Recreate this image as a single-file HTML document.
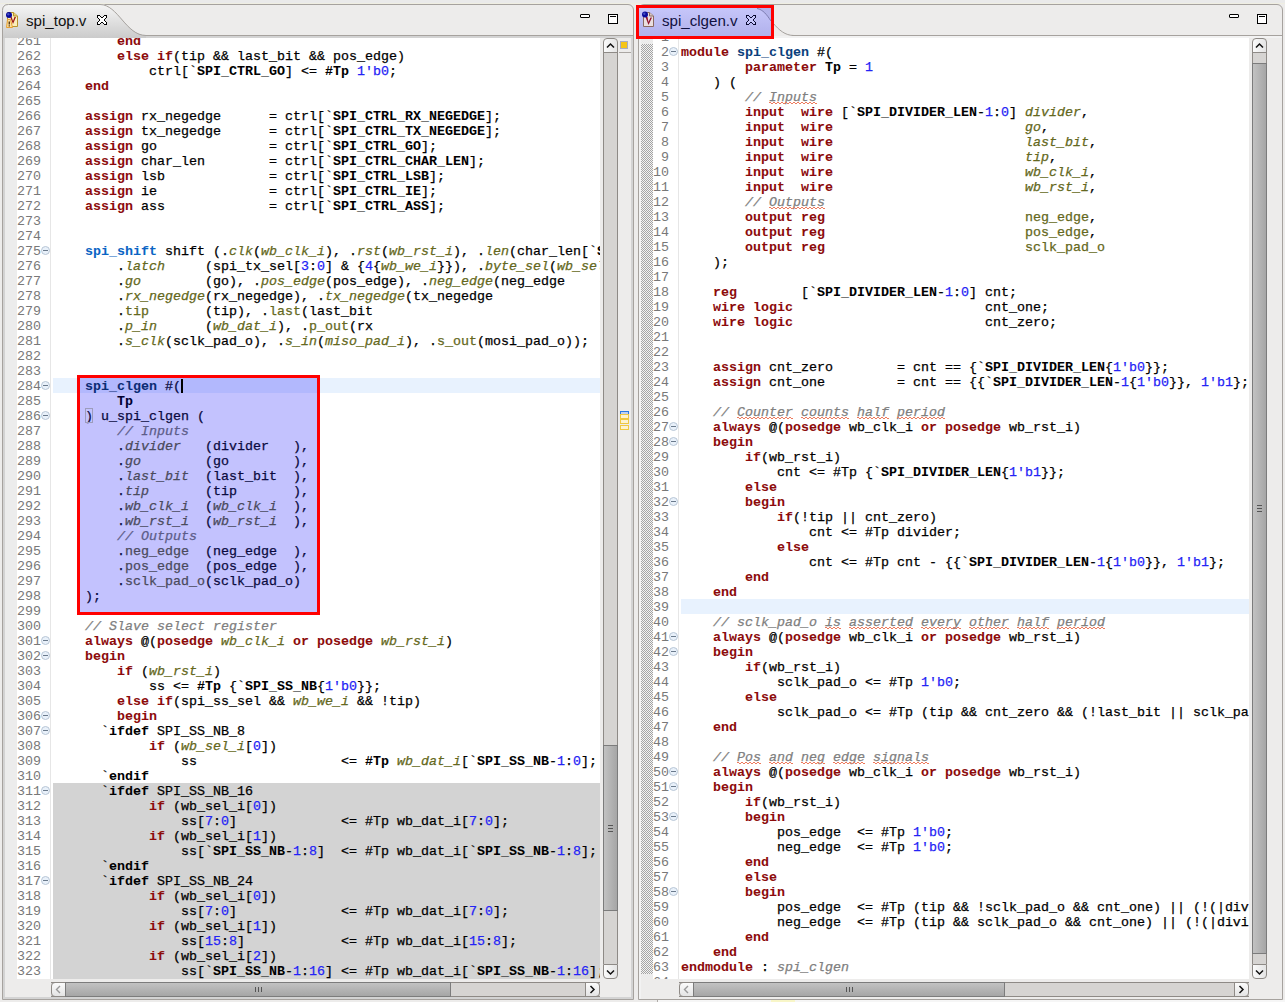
<!DOCTYPE html>
<html><head><meta charset="utf-8"><style>
*{margin:0;padding:0;box-sizing:border-box}
html,body{width:1285px;height:1002px;overflow:hidden;background:#edeceb;position:relative;font-family:"Liberation Sans",sans-serif}
.a{position:absolute}
.code{position:absolute;font-family:"Liberation Mono",monospace;font-size:13.333px;-webkit-text-stroke:0.25px currentColor;line-height:15px;white-space:pre;color:#000}
.ln{position:absolute;font-family:"Liberation Mono",monospace;font-size:13.333px;line-height:15px;white-space:pre;color:#787878;text-align:right}
i{font-style:normal}
i.k{font-weight:bold;color:#8c0b0b;-webkit-text-stroke:0.05px currentColor}
i.b{font-weight:bold;-webkit-text-stroke:0.05px currentColor}
i.n{color:#2323f5}
i.c{font-style:italic;color:#808080}
i.cs{font-style:italic;color:#808080}
.sq{position:absolute;height:2px;background:repeating-linear-gradient(90deg,#ee7a5c 0 2px,transparent 2px 4px) 0 0/100% 1px no-repeat,repeating-linear-gradient(90deg,transparent 0 2px,#ee7a5c 2px 4px) 0 1px/100% 1px no-repeat}
i.pi{font-style:italic;color:#646820}
i.po{color:#646820}
i.mi{font-weight:bold;color:#0a64c4;-webkit-text-stroke:0.05px currentColor}
i.md{font-weight:bold;color:#0b3f7c;-webkit-text-stroke:0.05px currentColor}

.sel{color:#0a0a40}
.sel i.pi,.sel i.po{color:#4a4a5c}
.sel i.c{color:#5c5c88}
.sel i.md{color:#0c2c74}
.sel i.b{color:#000030}
.fold{position:absolute;width:9px;height:9px;border-radius:50%;background:#e9f1fa;border:1px solid #b8c6d6}
.fold:after{content:"";position:absolute;left:1px;top:3px;width:5px;height:1px;background:#6a7a8c}
</style></head>
<body>
<div class="a" style="left:0;top:0;width:1285px;height:3px;background:#eaeaea"></div>
<div class="a" style="left:0;top:3px;width:1285px;height:1px;background:#efeee2"></div>
<div class="a" style="left:657px;top:1000px;width:628px;height:2px;background:#f6f6f6;border-left:1px solid #b0aca8"></div>
<div class="a" style="left:771px;top:1000px;width:24px;height:2px;background:#f8f6c8"></div>
<div class="a" style="left:2px;top:4px;width:632px;height:996px;border:1px solid #a6a29e;border-radius:6px 6px 0 0;background:#edeceb"></div>
<div class="a" style="left:143px;top:35px;width:490px;height:1px;background:#a6a29e"></div>
<div class="a" style="left:3px;top:36px;width:630px;height:2px;background:#d3d3d3"></div>
<div class="a" style="left:3px;top:36px;width:2px;height:963px;background:#d3d3d3"></div>
<div class="a" style="left:631px;top:36px;width:2px;height:963px;background:#d3d3d3"></div>
<div class="a" style="left:3px;top:997px;width:630px;height:2px;background:#d3d3d3"></div>
<div class="a" style="left:5px;top:38px;width:12px;height:941px;background:#ececec"></div>
<div class="a" style="left:17px;top:38px;width:33px;height:941px;background:#fff"></div>
<div class="a" style="left:50px;top:38px;width:1px;height:941px;background:#e6e6e6"></div>
<div class="a" style="left:51px;top:38px;width:549px;height:941px;background:#fff"></div>
<div class="a" style="left:53px;top:378px;width:547px;height:15px;background:#e8f2fe"></div>
<div class="a" style="left:53px;top:783px;width:547px;height:196px;background:#d3d3d3"></div>
<div class="a" style="left:77px;top:378px;width:240px;height:234px;background:#c3c2fe"></div>
<div class="a" style="left:77px;top:378px;width:240px;height:15px;background:#b2b8fd"></div>
<div class="a" style="left:53px;top:38px;width:547px;height:941px;overflow:hidden"><div class="code" style="left:0;top:-4px">        <i class="k">end</i></div><div class="code" style="left:0;top:11px">        <i class="k">else</i> <i class="k">if</i>(tip &amp;&amp; last_bit &amp;&amp; pos_edge)</div><div class="code" style="left:0;top:26px">            ctrl[`<i class="b">SPI_CTRL_GO</i>] &lt;= <i class="b">#Tp</i> <i class="n">1'b0</i>;</div><div class="code" style="left:0;top:41px">    <i class="k">end</i></div><div class="code" style="left:0;top:56px"></div><div class="code" style="left:0;top:71px">    <i class="k">assign</i> rx_negedge      = ctrl[`<i class="b">SPI_CTRL_RX_NEGEDGE</i>];</div><div class="code" style="left:0;top:86px">    <i class="k">assign</i> tx_negedge      = ctrl[`<i class="b">SPI_CTRL_TX_NEGEDGE</i>];</div><div class="code" style="left:0;top:101px">    <i class="k">assign</i> go              = ctrl[`<i class="b">SPI_CTRL_GO</i>];</div><div class="code" style="left:0;top:116px">    <i class="k">assign</i> char_len        = ctrl[`<i class="b">SPI_CTRL_CHAR_LEN</i>];</div><div class="code" style="left:0;top:131px">    <i class="k">assign</i> lsb             = ctrl[`<i class="b">SPI_CTRL_LSB</i>];</div><div class="code" style="left:0;top:146px">    <i class="k">assign</i> ie              = ctrl[`<i class="b">SPI_CTRL_IE</i>];</div><div class="code" style="left:0;top:161px">    <i class="k">assign</i> ass             = ctrl[`<i class="b">SPI_CTRL_ASS</i>];</div><div class="code" style="left:0;top:176px"></div><div class="code" style="left:0;top:191px"></div><div class="code" style="left:0;top:206px">    <i class="mi">spi_shift</i> shift (.<i class="pi">clk</i>(<i class="pi">wb_clk_i</i>), .<i class="pi">rst</i>(<i class="pi">wb_rst_i</i>), .<i class="pi">len</i>(char_len[`<i class="b">SPI_CTRL_LEN</i>]),</div><div class="code" style="left:0;top:221px">        .<i class="pi">latch</i>     (spi_tx_sel[<i class="n">3</i>:<i class="n">0</i>] &amp; {<i class="n">4</i>{<i class="pi">wb_we_i</i>}}), .<i class="pi">byte_sel</i>(<i class="pi">wb_sel_i</i>),</div><div class="code" style="left:0;top:236px">        .<i class="pi">go</i>        (go), .<i class="pi">pos_edge</i>(pos_edge), .<i class="pi">neg_edge</i>(neg_edge</div><div class="code" style="left:0;top:251px">        .<i class="pi">rx_negedge</i>(rx_negedge), .<i class="pi">tx_negedge</i>(tx_negedge</div><div class="code" style="left:0;top:266px">        .<i class="po">tip</i>       (tip), .<i class="po">last</i>(last_bit</div><div class="code" style="left:0;top:281px">        .<i class="pi">p_in</i>      (<i class="pi">wb_dat_i</i>), .<i class="po">p_out</i>(rx</div><div class="code" style="left:0;top:296px">        .<i class="pi">s_clk</i>(sclk_pad_o), .<i class="pi">s_in</i>(<i class="pi">miso_pad_i</i>), .<i class="po">s_out</i>(mosi_pad_o));</div><div class="code" style="left:0;top:311px"></div><div class="code" style="left:0;top:326px"></div><div class="code sel" style="left:0;top:341px">    <i class="md">spi_clgen</i> #(</div><div class="code sel" style="left:0;top:356px">        <i class="b">Tp</i></div><div class="code sel" style="left:0;top:371px">    <i class="bm">)</i> u_spi_clgen (</div><div class="code sel" style="left:0;top:386px">        <i class="c">// Inputs</i></div><div class="code sel" style="left:0;top:401px">        .<i class="pi">divider</i>   (divider   ),</div><div class="code sel" style="left:0;top:416px">        .<i class="pi">go</i>        (go        ),</div><div class="code sel" style="left:0;top:431px">        .<i class="pi">last_bit</i>  (last_bit  ),</div><div class="code sel" style="left:0;top:446px">        .<i class="pi">tip</i>       (tip       ),</div><div class="code sel" style="left:0;top:461px">        .<i class="pi">wb_clk_i</i>  (<i class="pi">wb_clk_i</i>  ),</div><div class="code sel" style="left:0;top:476px">        .<i class="pi">wb_rst_i</i>  (<i class="pi">wb_rst_i</i>  ),</div><div class="code sel" style="left:0;top:491px">        <i class="c">// Outputs</i></div><div class="code sel" style="left:0;top:506px">        .<i class="po">neg_edge</i>  (neg_edge  ),</div><div class="code sel" style="left:0;top:521px">        .<i class="po">pos_edge</i>  (pos_edge  ),</div><div class="code sel" style="left:0;top:536px">        .<i class="po">sclk_pad_o</i>(sclk_pad_o)</div><div class="code sel" style="left:0;top:551px">    );</div><div class="code" style="left:0;top:566px"></div><div class="code" style="left:0;top:581px">    <i class="c">// Slave select register</i></div><div class="code" style="left:0;top:596px">    <i class="k">always</i> @(<i class="k">posedge</i> <i class="pi">wb_clk_i</i> <i class="k">or</i> <i class="k">posedge</i> <i class="pi">wb_rst_i</i>)</div><div class="code" style="left:0;top:611px">    <i class="k">begin</i></div><div class="code" style="left:0;top:626px">        <i class="k">if</i> (<i class="pi">wb_rst_i</i>)</div><div class="code" style="left:0;top:641px">            ss &lt;= <i class="b">#Tp</i> {`<i class="b">SPI_SS_NB</i>{<i class="n">1'b0</i>}};</div><div class="code" style="left:0;top:656px">        <i class="k">else</i> <i class="k">if</i>(spi_ss_sel &amp;&amp; <i class="pi">wb_we_i</i> &amp;&amp; !tip)</div><div class="code" style="left:0;top:671px">        <i class="k">begin</i></div><div class="code" style="left:0;top:686px">      `<i class="b">ifdef</i> SPI_SS_NB_8</div><div class="code" style="left:0;top:701px">            <i class="k">if</i> (<i class="pi">wb_sel_i</i>[<i class="n">0</i>])</div><div class="code" style="left:0;top:716px">                ss                  &lt;= <i class="b">#Tp</i> <i class="pi">wb_dat_i</i>[`<i class="b">SPI_SS_NB</i>-<i class="n">1</i>:<i class="n">0</i>];</div><div class="code" style="left:0;top:731px">      `<i class="b">endif</i></div><div class="code gray" style="left:0;top:746px">      `<i class="b">ifdef</i> SPI_SS_NB_16</div><div class="code gray" style="left:0;top:761px">            <i class="k">if</i> (wb_sel_i[<i class="n">0</i>])</div><div class="code gray" style="left:0;top:776px">                ss[<i class="n">7</i>:<i class="n">0</i>]             &lt;= #Tp wb_dat_i[<i class="n">7</i>:<i class="n">0</i>];</div><div class="code gray" style="left:0;top:791px">            <i class="k">if</i> (wb_sel_i[<i class="n">1</i>])</div><div class="code gray" style="left:0;top:806px">                ss[`<i class="b">SPI_SS_NB</i>-<i class="n">1</i>:<i class="n">8</i>]  &lt;= #Tp wb_dat_i[`<i class="b">SPI_SS_NB</i>-<i class="n">1</i>:<i class="n">8</i>];</div><div class="code gray" style="left:0;top:821px">      `<i class="b">endif</i></div><div class="code gray" style="left:0;top:836px">      `<i class="b">ifdef</i> SPI_SS_NB_24</div><div class="code gray" style="left:0;top:851px">            <i class="k">if</i> (wb_sel_i[<i class="n">0</i>])</div><div class="code gray" style="left:0;top:866px">                ss[<i class="n">7</i>:<i class="n">0</i>]             &lt;= #Tp wb_dat_i[<i class="n">7</i>:<i class="n">0</i>];</div><div class="code gray" style="left:0;top:881px">            <i class="k">if</i> (wb_sel_i[<i class="n">1</i>])</div><div class="code gray" style="left:0;top:896px">                ss[<i class="n">15</i>:<i class="n">8</i>]            &lt;= #Tp wb_dat_i[<i class="n">15</i>:<i class="n">8</i>];</div><div class="code gray" style="left:0;top:911px">            <i class="k">if</i> (wb_sel_i[<i class="n">2</i>])</div><div class="code gray" style="left:0;top:926px">                ss[`<i class="b">SPI_SS_NB</i>-<i class="n">1</i>:<i class="n">16</i>] &lt;= #Tp wb_dat_i[`<i class="b">SPI_SS_NB</i>-<i class="n">1</i>:<i class="n">16</i>];</div></div>
<div class="a" style="left:85px;top:408px;width:8px;height:15px;border:1px solid #9c9cbc"></div>
<div class="a" style="left:181px;top:379px;width:2px;height:14px;background:#000"></div>
<div class="a" style="left:0;top:38px;width:41px;height:941px;overflow:hidden"><div class="ln" style="right:0;top:-4px">261</div><div class="ln" style="right:0;top:11px">262</div><div class="ln" style="right:0;top:26px">263</div><div class="ln" style="right:0;top:41px">264</div><div class="ln" style="right:0;top:56px">265</div><div class="ln" style="right:0;top:71px">266</div><div class="ln" style="right:0;top:86px">267</div><div class="ln" style="right:0;top:101px">268</div><div class="ln" style="right:0;top:116px">269</div><div class="ln" style="right:0;top:131px">270</div><div class="ln" style="right:0;top:146px">271</div><div class="ln" style="right:0;top:161px">272</div><div class="ln" style="right:0;top:176px">273</div><div class="ln" style="right:0;top:191px">274</div><div class="ln" style="right:0;top:206px">275</div><div class="ln" style="right:0;top:221px">276</div><div class="ln" style="right:0;top:236px">277</div><div class="ln" style="right:0;top:251px">278</div><div class="ln" style="right:0;top:266px">279</div><div class="ln" style="right:0;top:281px">280</div><div class="ln" style="right:0;top:296px">281</div><div class="ln" style="right:0;top:311px">282</div><div class="ln" style="right:0;top:326px">283</div><div class="ln" style="right:0;top:341px">284</div><div class="ln" style="right:0;top:356px">285</div><div class="ln" style="right:0;top:371px">286</div><div class="ln" style="right:0;top:386px">287</div><div class="ln" style="right:0;top:401px">288</div><div class="ln" style="right:0;top:416px">289</div><div class="ln" style="right:0;top:431px">290</div><div class="ln" style="right:0;top:446px">291</div><div class="ln" style="right:0;top:461px">292</div><div class="ln" style="right:0;top:476px">293</div><div class="ln" style="right:0;top:491px">294</div><div class="ln" style="right:0;top:506px">295</div><div class="ln" style="right:0;top:521px">296</div><div class="ln" style="right:0;top:536px">297</div><div class="ln" style="right:0;top:551px">298</div><div class="ln" style="right:0;top:566px">299</div><div class="ln" style="right:0;top:581px">300</div><div class="ln" style="right:0;top:596px">301</div><div class="ln" style="right:0;top:611px">302</div><div class="ln" style="right:0;top:626px">303</div><div class="ln" style="right:0;top:641px">304</div><div class="ln" style="right:0;top:656px">305</div><div class="ln" style="right:0;top:671px">306</div><div class="ln" style="right:0;top:686px">307</div><div class="ln" style="right:0;top:701px">308</div><div class="ln" style="right:0;top:716px">309</div><div class="ln" style="right:0;top:731px">310</div><div class="ln" style="right:0;top:746px">311</div><div class="ln" style="right:0;top:761px">312</div><div class="ln" style="right:0;top:776px">313</div><div class="ln" style="right:0;top:791px">314</div><div class="ln" style="right:0;top:806px">315</div><div class="ln" style="right:0;top:821px">316</div><div class="ln" style="right:0;top:836px">317</div><div class="ln" style="right:0;top:851px">318</div><div class="ln" style="right:0;top:866px">319</div><div class="ln" style="right:0;top:881px">320</div><div class="ln" style="right:0;top:896px">321</div><div class="ln" style="right:0;top:911px">322</div><div class="ln" style="right:0;top:926px">323</div></div>
<div class="fold" style="left:41px;top:246.0px"></div>
<div class="fold" style="left:41px;top:381.0px"></div>
<div class="fold" style="left:41px;top:411.0px"></div>
<div class="fold" style="left:41px;top:636.0px"></div>
<div class="fold" style="left:41px;top:651.0px"></div>
<div class="fold" style="left:41px;top:711.0px"></div>
<div class="fold" style="left:41px;top:726.0px"></div>
<div class="fold" style="left:41px;top:786.0px"></div>
<div class="fold" style="left:41px;top:876.0px"></div>
<div class="a" style="left:77px;top:375px;width:243px;height:240px;border:3px solid #ff0000"></div>
<div class="a" style="left:638px;top:4px;width:645px;height:996px;border:1px solid #a6a29e;border-radius:6px 6px 0 0;background:#edeceb"></div>
<div class="a" style="left:792px;top:35px;width:490px;height:1px;background:#a6a29e"></div>
<div class="a" style="left:639px;top:36px;width:643px;height:2px;background:#f2f2f2"></div>
<div class="a" style="left:639px;top:36px;width:2px;height:963px;background:#f2f2f2"></div>
<div class="a" style="left:641px;top:38px;width:12px;height:941px;background:#ececec"></div>
<div class="a" style="left:641px;top:44px;width:12px;height:930px;background:repeating-conic-gradient(#a4a4a4 0 25%,#f2f2f2 0 50%) 0 0/2px 2px"></div>
<div class="a" style="left:653px;top:38px;width:25px;height:941px;background:#fff"></div>
<div class="a" style="left:678px;top:38px;width:1px;height:941px;background:#e6e6e6"></div>
<div class="a" style="left:679px;top:38px;width:570px;height:941px;background:#fff"></div>
<div class="a" style="left:681px;top:599px;width:568px;height:15px;background:#e8f2fe"></div>
<div class="a" style="left:681px;top:38px;width:568px;height:941px;overflow:hidden"><div class="code" style="left:0;top:-8px"></div><div class="code" style="left:0;top:7px"><i class="k">module</i> <i class="md">spi_clgen</i> #(</div><div class="code" style="left:0;top:22px">        <i class="k">parameter</i> <i class="b">Tp</i> = <i class="n">1</i></div><div class="code" style="left:0;top:37px">    ) (</div><div class="code" style="left:0;top:52px">        <i class="c">// </i><i class="cs">Inputs</i></div><div class="code" style="left:0;top:67px">        <i class="k">input</i>  <i class="k">wire</i> [`<i class="b">SPI_DIVIDER_LEN</i>-<i class="n">1</i>:<i class="n">0</i>] <i class="pi">divider</i>,</div><div class="code" style="left:0;top:82px">        <i class="k">input</i>  <i class="k">wire</i>                        <i class="pi">go</i>,</div><div class="code" style="left:0;top:97px">        <i class="k">input</i>  <i class="k">wire</i>                        <i class="pi">last_bit</i>,</div><div class="code" style="left:0;top:112px">        <i class="k">input</i>  <i class="k">wire</i>                        <i class="pi">tip</i>,</div><div class="code" style="left:0;top:127px">        <i class="k">input</i>  <i class="k">wire</i>                        <i class="pi">wb_clk_i</i>,</div><div class="code" style="left:0;top:142px">        <i class="k">input</i>  <i class="k">wire</i>                        <i class="pi">wb_rst_i</i>,</div><div class="code" style="left:0;top:157px">        <i class="c">// </i><i class="cs">Outputs</i></div><div class="code" style="left:0;top:172px">        <i class="k">output</i> <i class="k">reg</i>                         <i class="po">neg_edge</i>,</div><div class="code" style="left:0;top:187px">        <i class="k">output</i> <i class="k">reg</i>                         <i class="po">pos_edge</i>,</div><div class="code" style="left:0;top:202px">        <i class="k">output</i> <i class="k">reg</i>                         <i class="po">sclk_pad_o</i></div><div class="code" style="left:0;top:217px">    );</div><div class="code" style="left:0;top:232px"></div><div class="code" style="left:0;top:247px">    <i class="k">reg</i>        [`<i class="b">SPI_DIVIDER_LEN</i>-<i class="n">1</i>:<i class="n">0</i>] cnt;</div><div class="code" style="left:0;top:262px">    <i class="k">wire</i> <i class="k">logic</i>                        cnt_one;</div><div class="code" style="left:0;top:277px">    <i class="k">wire</i> <i class="k">logic</i>                        cnt_zero;</div><div class="code" style="left:0;top:292px"></div><div class="code" style="left:0;top:307px"></div><div class="code" style="left:0;top:322px">    <i class="k">assign</i> cnt_zero        = cnt == {`<i class="b">SPI_DIVIDER_LEN</i>{<i class="n">1'b0</i>}};</div><div class="code" style="left:0;top:337px">    <i class="k">assign</i> cnt_one         = cnt == {{`<i class="b">SPI_DIVIDER_LEN</i>-<i class="n">1</i>{<i class="n">1'b0</i>}}, <i class="n">1'b1</i>};</div><div class="code" style="left:0;top:352px"></div><div class="code" style="left:0;top:367px">    <i class="c">// </i><i class="cs">Counter</i><i class="c"> </i><i class="cs">counts</i><i class="c"> </i><i class="cs">half</i><i class="c"> </i><i class="cs">period</i></div><div class="code" style="left:0;top:382px">    <i class="k">always</i> @(<i class="k">posedge</i> wb_clk_i <i class="k">or</i> <i class="k">posedge</i> wb_rst_i)</div><div class="code" style="left:0;top:397px">    <i class="k">begin</i></div><div class="code" style="left:0;top:412px">        <i class="k">if</i>(wb_rst_i)</div><div class="code" style="left:0;top:427px">            cnt &lt;= #Tp {`<i class="b">SPI_DIVIDER_LEN</i>{<i class="n">1'b1</i>}};</div><div class="code" style="left:0;top:442px">        <i class="k">else</i></div><div class="code" style="left:0;top:457px">        <i class="k">begin</i></div><div class="code" style="left:0;top:472px">            <i class="k">if</i>(!tip || cnt_zero)</div><div class="code" style="left:0;top:487px">                cnt &lt;= #Tp divider;</div><div class="code" style="left:0;top:502px">            <i class="k">else</i></div><div class="code" style="left:0;top:517px">                cnt &lt;= #Tp cnt - {{`<i class="b">SPI_DIVIDER_LEN</i>-<i class="n">1</i>{<i class="n">1'b0</i>}}, <i class="n">1'b1</i>};</div><div class="code" style="left:0;top:532px">        <i class="k">end</i></div><div class="code" style="left:0;top:547px">    <i class="k">end</i></div><div class="code" style="left:0;top:562px"></div><div class="code" style="left:0;top:577px">    <i class="c">// sclk_pad_o </i><i class="cs">is</i><i class="c"> </i><i class="cs">asserted</i><i class="c"> </i><i class="cs">every</i><i class="c"> </i><i class="cs">other</i><i class="c"> </i><i class="cs">half</i><i class="c"> </i><i class="cs">period</i></div><div class="code" style="left:0;top:592px">    <i class="k">always</i> @(<i class="k">posedge</i> wb_clk_i <i class="k">or</i> <i class="k">posedge</i> wb_rst_i)</div><div class="code" style="left:0;top:607px">    <i class="k">begin</i></div><div class="code" style="left:0;top:622px">        <i class="k">if</i>(wb_rst_i)</div><div class="code" style="left:0;top:637px">            sclk_pad_o &lt;= #Tp <i class="n">1'b0</i>;</div><div class="code" style="left:0;top:652px">        <i class="k">else</i></div><div class="code" style="left:0;top:667px">            sclk_pad_o &lt;= #Tp (tip &amp;&amp; cnt_zero &amp;&amp; (!last_bit || sclk_pad_o));</div><div class="code" style="left:0;top:682px">    <i class="k">end</i></div><div class="code" style="left:0;top:697px"></div><div class="code" style="left:0;top:712px">    <i class="c">// </i><i class="cs">Pos</i><i class="c"> </i><i class="cs">and</i><i class="c"> </i><i class="cs">neg</i><i class="c"> </i><i class="cs">edge</i><i class="c"> </i><i class="cs">signals</i></div><div class="code" style="left:0;top:727px">    <i class="k">always</i> @(<i class="k">posedge</i> wb_clk_i <i class="k">or</i> <i class="k">posedge</i> wb_rst_i)</div><div class="code" style="left:0;top:742px">    <i class="k">begin</i></div><div class="code" style="left:0;top:757px">        <i class="k">if</i>(wb_rst_i)</div><div class="code" style="left:0;top:772px">        <i class="k">begin</i></div><div class="code" style="left:0;top:787px">            pos_edge  &lt;= #Tp <i class="n">1'b0</i>;</div><div class="code" style="left:0;top:802px">            neg_edge  &lt;= #Tp <i class="n">1'b0</i>;</div><div class="code" style="left:0;top:817px">        <i class="k">end</i></div><div class="code" style="left:0;top:832px">        <i class="k">else</i></div><div class="code" style="left:0;top:847px">        <i class="k">begin</i></div><div class="code" style="left:0;top:862px">            pos_edge  &lt;= #Tp (tip &amp;&amp; !sclk_pad_o &amp;&amp; cnt_one) || (!(|divider) &amp;&amp; sclk_pad_o));</div><div class="code" style="left:0;top:877px">            neg_edge  &lt;= #Tp (tip &amp;&amp; sclk_pad_o &amp;&amp; cnt_one) || (!(|divider) &amp;&amp; !sclk_pad_o));</div><div class="code" style="left:0;top:892px">        <i class="k">end</i></div><div class="code" style="left:0;top:907px">    <i class="k">end</i></div><div class="code" style="left:0;top:922px"><i class="k">endmodule</i> : <i class="c">spi_clgen</i></div><div class="code" style="left:0;top:937px"></div></div>
<div class="a" style="left:600px;top:38px;width:69px;height:941px;overflow:hidden"><div class="ln" style="right:0;top:-8px">1</div><div class="ln" style="right:0;top:7px">2</div><div class="ln" style="right:0;top:22px">3</div><div class="ln" style="right:0;top:37px">4</div><div class="ln" style="right:0;top:52px">5</div><div class="ln" style="right:0;top:67px">6</div><div class="ln" style="right:0;top:82px">7</div><div class="ln" style="right:0;top:97px">8</div><div class="ln" style="right:0;top:112px">9</div><div class="ln" style="right:0;top:127px">10</div><div class="ln" style="right:0;top:142px">11</div><div class="ln" style="right:0;top:157px">12</div><div class="ln" style="right:0;top:172px">13</div><div class="ln" style="right:0;top:187px">14</div><div class="ln" style="right:0;top:202px">15</div><div class="ln" style="right:0;top:217px">16</div><div class="ln" style="right:0;top:232px">17</div><div class="ln" style="right:0;top:247px">18</div><div class="ln" style="right:0;top:262px">19</div><div class="ln" style="right:0;top:277px">20</div><div class="ln" style="right:0;top:292px">21</div><div class="ln" style="right:0;top:307px">22</div><div class="ln" style="right:0;top:322px">23</div><div class="ln" style="right:0;top:337px">24</div><div class="ln" style="right:0;top:352px">25</div><div class="ln" style="right:0;top:367px">26</div><div class="ln" style="right:0;top:382px">27</div><div class="ln" style="right:0;top:397px">28</div><div class="ln" style="right:0;top:412px">29</div><div class="ln" style="right:0;top:427px">30</div><div class="ln" style="right:0;top:442px">31</div><div class="ln" style="right:0;top:457px">32</div><div class="ln" style="right:0;top:472px">33</div><div class="ln" style="right:0;top:487px">34</div><div class="ln" style="right:0;top:502px">35</div><div class="ln" style="right:0;top:517px">36</div><div class="ln" style="right:0;top:532px">37</div><div class="ln" style="right:0;top:547px">38</div><div class="ln" style="right:0;top:562px">39</div><div class="ln" style="right:0;top:577px">40</div><div class="ln" style="right:0;top:592px">41</div><div class="ln" style="right:0;top:607px">42</div><div class="ln" style="right:0;top:622px">43</div><div class="ln" style="right:0;top:637px">44</div><div class="ln" style="right:0;top:652px">45</div><div class="ln" style="right:0;top:667px">46</div><div class="ln" style="right:0;top:682px">47</div><div class="ln" style="right:0;top:697px">48</div><div class="ln" style="right:0;top:712px">49</div><div class="ln" style="right:0;top:727px">50</div><div class="ln" style="right:0;top:742px">51</div><div class="ln" style="right:0;top:757px">52</div><div class="ln" style="right:0;top:772px">53</div><div class="ln" style="right:0;top:787px">54</div><div class="ln" style="right:0;top:802px">55</div><div class="ln" style="right:0;top:817px">56</div><div class="ln" style="right:0;top:832px">57</div><div class="ln" style="right:0;top:847px">58</div><div class="ln" style="right:0;top:862px">59</div><div class="ln" style="right:0;top:877px">60</div><div class="ln" style="right:0;top:892px">61</div><div class="ln" style="right:0;top:907px">62</div><div class="ln" style="right:0;top:922px">63</div><div class="ln" style="right:0;top:937px">64</div></div>
<div class="sq" style="left:769px;top:102px;width:48px"></div>
<div class="sq" style="left:769px;top:207px;width:56px"></div>
<div class="sq" style="left:737px;top:417px;width:56px"></div>
<div class="sq" style="left:801px;top:417px;width:48px"></div>
<div class="sq" style="left:857px;top:417px;width:32px"></div>
<div class="sq" style="left:897px;top:417px;width:48px"></div>
<div class="sq" style="left:825px;top:627px;width:16px"></div>
<div class="sq" style="left:849px;top:627px;width:64px"></div>
<div class="sq" style="left:921px;top:627px;width:40px"></div>
<div class="sq" style="left:969px;top:627px;width:40px"></div>
<div class="sq" style="left:1017px;top:627px;width:32px"></div>
<div class="sq" style="left:1057px;top:627px;width:48px"></div>
<div class="sq" style="left:737px;top:762px;width:24px"></div>
<div class="sq" style="left:769px;top:762px;width:24px"></div>
<div class="sq" style="left:801px;top:762px;width:24px"></div>
<div class="sq" style="left:833px;top:762px;width:32px"></div>
<div class="sq" style="left:873px;top:762px;width:56px"></div>
<div class="fold" style="left:669px;top:47.0px"></div>
<div class="fold" style="left:669px;top:422.0px"></div>
<div class="fold" style="left:669px;top:437.0px"></div>
<div class="fold" style="left:669px;top:497.0px"></div>
<div class="fold" style="left:669px;top:632.0px"></div>
<div class="fold" style="left:669px;top:647.0px"></div>
<div class="fold" style="left:669px;top:767.0px"></div>
<div class="fold" style="left:669px;top:782.0px"></div>
<div class="fold" style="left:669px;top:812.0px"></div>
<div class="fold" style="left:669px;top:887.0px"></div>
<svg class="a" style="left:0;top:0" width="1285" height="40"><defs><linearGradient id="gt" x1="0" y1="0" x2="0" y2="1"><stop offset="0" stop-color="#f6f6f6"/><stop offset="1" stop-color="#cbcbcb"/></linearGradient><linearGradient id="ga" x1="0" y1="0" x2="0" y2="1"><stop offset="0" stop-color="#c6c6fa"/><stop offset="1" stop-color="#b1b1ec"/></linearGradient></defs>
<path d="M2,38 L2,10 Q2,4 8,4 L100,4 C118,4 126,35 146,35 L146,38 Z" fill="url(#gt)"/>
<path d="M2.5,38 L2.5,10.5 Q2.5,4.5 8.5,4.5 L100,4.5 C118,4.5 126,35.5 146,35.5" fill="none" stroke="#a6a29e"/>
<rect x="639" y="8" width="132" height="28" fill="url(#ga)"/>
<path d="M757,8 C763,9 767,15 771,21 L771,8 Z" fill="#b2b2ea"/>
<path d="M757,8.5 C763,9.5 767,15 771,21" fill="none" stroke="#7c7cb0" stroke-width="1"/>
<path d="M773,23 C779,30 785,35.5 794,35.5" fill="none" stroke="#a6a29e"/>
</svg>
<div class="a" style="left:26px;top:11px;font-size:15.1px;line-height:20px;color:#111">spi_top.v</div>
<div class="a" style="left:662px;top:11px;font-size:15.1px;line-height:20px;color:#101040">spi_clgen.v</div>
<svg class="a" style="left:97px;top:15px" width="10" height="10" shape-rendering="crispEdges"><rect x="0" y="0" width="1" height="1" fill="#000"/><rect x="1" y="0" width="1" height="1" fill="#000"/><rect x="2" y="0" width="1" height="1" fill="#000"/><rect x="7" y="0" width="1" height="1" fill="#000"/><rect x="8" y="0" width="1" height="1" fill="#000"/><rect x="9" y="0" width="1" height="1" fill="#000"/><rect x="0" y="1" width="1" height="1" fill="#000"/><rect x="1" y="1" width="1" height="1" fill="#fff"/><rect x="2" y="1" width="1" height="1" fill="#fff"/><rect x="3" y="1" width="1" height="1" fill="#000"/><rect x="6" y="1" width="1" height="1" fill="#000"/><rect x="7" y="1" width="1" height="1" fill="#fff"/><rect x="8" y="1" width="1" height="1" fill="#fff"/><rect x="9" y="1" width="1" height="1" fill="#000"/><rect x="0" y="2" width="1" height="1" fill="#000"/><rect x="1" y="2" width="1" height="1" fill="#fff"/><rect x="2" y="2" width="1" height="1" fill="#fff"/><rect x="3" y="2" width="1" height="1" fill="#fff"/><rect x="4" y="2" width="1" height="1" fill="#000"/><rect x="5" y="2" width="1" height="1" fill="#000"/><rect x="6" y="2" width="1" height="1" fill="#fff"/><rect x="7" y="2" width="1" height="1" fill="#fff"/><rect x="8" y="2" width="1" height="1" fill="#fff"/><rect x="9" y="2" width="1" height="1" fill="#000"/><rect x="1" y="3" width="1" height="1" fill="#000"/><rect x="2" y="3" width="1" height="1" fill="#fff"/><rect x="3" y="3" width="1" height="1" fill="#fff"/><rect x="4" y="3" width="1" height="1" fill="#fff"/><rect x="5" y="3" width="1" height="1" fill="#fff"/><rect x="6" y="3" width="1" height="1" fill="#fff"/><rect x="7" y="3" width="1" height="1" fill="#fff"/><rect x="8" y="3" width="1" height="1" fill="#000"/><rect x="2" y="4" width="1" height="1" fill="#000"/><rect x="3" y="4" width="1" height="1" fill="#fff"/><rect x="4" y="4" width="1" height="1" fill="#fff"/><rect x="5" y="4" width="1" height="1" fill="#fff"/><rect x="6" y="4" width="1" height="1" fill="#fff"/><rect x="7" y="4" width="1" height="1" fill="#000"/><rect x="2" y="5" width="1" height="1" fill="#000"/><rect x="3" y="5" width="1" height="1" fill="#fff"/><rect x="4" y="5" width="1" height="1" fill="#fff"/><rect x="5" y="5" width="1" height="1" fill="#fff"/><rect x="6" y="5" width="1" height="1" fill="#fff"/><rect x="7" y="5" width="1" height="1" fill="#000"/><rect x="1" y="6" width="1" height="1" fill="#000"/><rect x="2" y="6" width="1" height="1" fill="#fff"/><rect x="3" y="6" width="1" height="1" fill="#fff"/><rect x="4" y="6" width="1" height="1" fill="#fff"/><rect x="5" y="6" width="1" height="1" fill="#fff"/><rect x="6" y="6" width="1" height="1" fill="#fff"/><rect x="7" y="6" width="1" height="1" fill="#fff"/><rect x="8" y="6" width="1" height="1" fill="#000"/><rect x="0" y="7" width="1" height="1" fill="#000"/><rect x="1" y="7" width="1" height="1" fill="#fff"/><rect x="2" y="7" width="1" height="1" fill="#fff"/><rect x="3" y="7" width="1" height="1" fill="#fff"/><rect x="4" y="7" width="1" height="1" fill="#000"/><rect x="5" y="7" width="1" height="1" fill="#000"/><rect x="6" y="7" width="1" height="1" fill="#fff"/><rect x="7" y="7" width="1" height="1" fill="#fff"/><rect x="8" y="7" width="1" height="1" fill="#fff"/><rect x="9" y="7" width="1" height="1" fill="#000"/><rect x="0" y="8" width="1" height="1" fill="#000"/><rect x="1" y="8" width="1" height="1" fill="#fff"/><rect x="2" y="8" width="1" height="1" fill="#fff"/><rect x="3" y="8" width="1" height="1" fill="#000"/><rect x="6" y="8" width="1" height="1" fill="#000"/><rect x="7" y="8" width="1" height="1" fill="#fff"/><rect x="8" y="8" width="1" height="1" fill="#fff"/><rect x="9" y="8" width="1" height="1" fill="#000"/><rect x="0" y="9" width="1" height="1" fill="#000"/><rect x="1" y="9" width="1" height="1" fill="#000"/><rect x="2" y="9" width="1" height="1" fill="#000"/><rect x="7" y="9" width="1" height="1" fill="#000"/><rect x="8" y="9" width="1" height="1" fill="#000"/><rect x="9" y="9" width="1" height="1" fill="#000"/></svg>
<svg class="a" style="left:746px;top:15px" width="10" height="10" shape-rendering="crispEdges"><rect x="0" y="0" width="1" height="1" fill="#0a0a30"/><rect x="1" y="0" width="1" height="1" fill="#0a0a30"/><rect x="2" y="0" width="1" height="1" fill="#0a0a30"/><rect x="7" y="0" width="1" height="1" fill="#0a0a30"/><rect x="8" y="0" width="1" height="1" fill="#0a0a30"/><rect x="9" y="0" width="1" height="1" fill="#0a0a30"/><rect x="0" y="1" width="1" height="1" fill="#0a0a30"/><rect x="1" y="1" width="1" height="1" fill="#c8c8fc"/><rect x="2" y="1" width="1" height="1" fill="#c8c8fc"/><rect x="3" y="1" width="1" height="1" fill="#0a0a30"/><rect x="6" y="1" width="1" height="1" fill="#0a0a30"/><rect x="7" y="1" width="1" height="1" fill="#c8c8fc"/><rect x="8" y="1" width="1" height="1" fill="#c8c8fc"/><rect x="9" y="1" width="1" height="1" fill="#0a0a30"/><rect x="0" y="2" width="1" height="1" fill="#0a0a30"/><rect x="1" y="2" width="1" height="1" fill="#c8c8fc"/><rect x="2" y="2" width="1" height="1" fill="#c8c8fc"/><rect x="3" y="2" width="1" height="1" fill="#c8c8fc"/><rect x="4" y="2" width="1" height="1" fill="#0a0a30"/><rect x="5" y="2" width="1" height="1" fill="#0a0a30"/><rect x="6" y="2" width="1" height="1" fill="#c8c8fc"/><rect x="7" y="2" width="1" height="1" fill="#c8c8fc"/><rect x="8" y="2" width="1" height="1" fill="#c8c8fc"/><rect x="9" y="2" width="1" height="1" fill="#0a0a30"/><rect x="1" y="3" width="1" height="1" fill="#0a0a30"/><rect x="2" y="3" width="1" height="1" fill="#c8c8fc"/><rect x="3" y="3" width="1" height="1" fill="#c8c8fc"/><rect x="4" y="3" width="1" height="1" fill="#c8c8fc"/><rect x="5" y="3" width="1" height="1" fill="#c8c8fc"/><rect x="6" y="3" width="1" height="1" fill="#c8c8fc"/><rect x="7" y="3" width="1" height="1" fill="#c8c8fc"/><rect x="8" y="3" width="1" height="1" fill="#0a0a30"/><rect x="2" y="4" width="1" height="1" fill="#0a0a30"/><rect x="3" y="4" width="1" height="1" fill="#c8c8fc"/><rect x="4" y="4" width="1" height="1" fill="#c8c8fc"/><rect x="5" y="4" width="1" height="1" fill="#c8c8fc"/><rect x="6" y="4" width="1" height="1" fill="#c8c8fc"/><rect x="7" y="4" width="1" height="1" fill="#0a0a30"/><rect x="2" y="5" width="1" height="1" fill="#0a0a30"/><rect x="3" y="5" width="1" height="1" fill="#c8c8fc"/><rect x="4" y="5" width="1" height="1" fill="#c8c8fc"/><rect x="5" y="5" width="1" height="1" fill="#c8c8fc"/><rect x="6" y="5" width="1" height="1" fill="#c8c8fc"/><rect x="7" y="5" width="1" height="1" fill="#0a0a30"/><rect x="1" y="6" width="1" height="1" fill="#0a0a30"/><rect x="2" y="6" width="1" height="1" fill="#c8c8fc"/><rect x="3" y="6" width="1" height="1" fill="#c8c8fc"/><rect x="4" y="6" width="1" height="1" fill="#c8c8fc"/><rect x="5" y="6" width="1" height="1" fill="#c8c8fc"/><rect x="6" y="6" width="1" height="1" fill="#c8c8fc"/><rect x="7" y="6" width="1" height="1" fill="#c8c8fc"/><rect x="8" y="6" width="1" height="1" fill="#0a0a30"/><rect x="0" y="7" width="1" height="1" fill="#0a0a30"/><rect x="1" y="7" width="1" height="1" fill="#c8c8fc"/><rect x="2" y="7" width="1" height="1" fill="#c8c8fc"/><rect x="3" y="7" width="1" height="1" fill="#c8c8fc"/><rect x="4" y="7" width="1" height="1" fill="#0a0a30"/><rect x="5" y="7" width="1" height="1" fill="#0a0a30"/><rect x="6" y="7" width="1" height="1" fill="#c8c8fc"/><rect x="7" y="7" width="1" height="1" fill="#c8c8fc"/><rect x="8" y="7" width="1" height="1" fill="#c8c8fc"/><rect x="9" y="7" width="1" height="1" fill="#0a0a30"/><rect x="0" y="8" width="1" height="1" fill="#0a0a30"/><rect x="1" y="8" width="1" height="1" fill="#c8c8fc"/><rect x="2" y="8" width="1" height="1" fill="#c8c8fc"/><rect x="3" y="8" width="1" height="1" fill="#0a0a30"/><rect x="6" y="8" width="1" height="1" fill="#0a0a30"/><rect x="7" y="8" width="1" height="1" fill="#c8c8fc"/><rect x="8" y="8" width="1" height="1" fill="#c8c8fc"/><rect x="9" y="8" width="1" height="1" fill="#0a0a30"/><rect x="0" y="9" width="1" height="1" fill="#0a0a30"/><rect x="1" y="9" width="1" height="1" fill="#0a0a30"/><rect x="2" y="9" width="1" height="1" fill="#0a0a30"/><rect x="7" y="9" width="1" height="1" fill="#0a0a30"/><rect x="8" y="9" width="1" height="1" fill="#0a0a30"/><rect x="9" y="9" width="1" height="1" fill="#0a0a30"/></svg>
<svg class="a" style="left:4px;top:10px" width="16" height="18">
<path d="M3.5,2.5 L9.5,2.5 L13.5,6 L13.5,16.5 L3.5,16.5 Z" fill="#fbeebb" stroke="#b8942c"/>
<path d="M9.5,2.5 L9.5,6 L13.5,6" fill="#e8cf7a" stroke="#b8942c"/>
<path d="M6,6.5 L9,14 L12,7 L10.5,7 L9,11 L7.5,6.5 Z" fill="#9a1414"/>
<path d="M3.5,9.5 L6.5,9.5 L8.5,17.5 L2.5,17.5 Z" fill="#fbe0a0" stroke="#e8a032" stroke-linejoin="round"/>
<rect x="4.6" y="11.5" width="1.3" height="3" fill="#4a2a08"/><rect x="4.6" y="15.3" width="1.3" height="1.2" fill="#4a2a08"/>
<circle cx="5" cy="5" r="3" fill="#0a0a9c"/><circle cx="4.3" cy="4.3" r="1.2" fill="#5a6ad0" opacity=".7"/>
</svg>
<svg class="a" style="left:640px;top:10px" width="16" height="18">
<path d="M3.5,2.5 L9.5,2.5 L13.5,6 L13.5,16.5 L3.5,16.5 Z" fill="#eadfe0" stroke="#8a6a60"/>
<path d="M9.5,2.5 L9.5,6 L13.5,6" fill="#d8c8c4" stroke="#8a6a60"/>
<path d="M5.5,7 L8.5,15 L12,7.5 L10.5,7.5 L8.5,12 L7.5,7 Z" fill="#901030"/>
<circle cx="5" cy="4.5" r="3" fill="#0a0a9c"/><circle cx="4.3" cy="3.8" r="1.2" fill="#5a6ad0" opacity=".7"/>
</svg>
<div class="a" style="left:580px;top:14px;width:10px;height:4px;border:1px solid #000;border-radius:1px;background:#fff"></div>
<div class="a" style="left:608px;top:14px;width:10px;height:10px;border:1px solid #000;background:#fff"><div class="a" style="left:1px;top:1px;width:6px;height:1px;background:#000"></div></div>
<div class="a" style="left:1229px;top:14px;width:10px;height:4px;border:1px solid #000;border-radius:1px;background:#fff"></div>
<div class="a" style="left:1257px;top:14px;width:10px;height:10px;border:1px solid #000;background:#fff"><div class="a" style="left:1px;top:1px;width:6px;height:1px;background:#000"></div></div>
<div class="a" style="left:636px;top:5px;width:138px;height:34px;border:3px solid #ff0000"></div>
<div class="a" style="left:603px;top:52px;width:15px;height:912px;background:#d6d4d2;border-left:1px solid #8e8a86;border-right:1px solid #8e8a86"></div>
<div class="a" style="left:603px;top:38px;width:15px;height:15px;background:linear-gradient(90deg,#fbfbfb,#e4e4e4);border:1px solid #8e8a86;border-radius:4px 4px 0 0"><svg class="a" style="left:2px;top:3px" width="9" height="7"><path d="M1,5.5 L4.5,2 L8,5.5" fill="none" stroke="#111" stroke-width="1.5"/></svg></div>
<div class="a" style="left:603px;top:964px;width:15px;height:15px;background:linear-gradient(90deg,#fbfbfb,#e4e4e4);border:1px solid #8e8a86;border-radius:0 0 4px 4px"><svg class="a" style="left:2px;top:4px" width="9" height="7"><path d="M1,1.5 L4.5,5 L8,1.5" fill="none" stroke="#111" stroke-width="1.5"/></svg></div>
<div class="a" style="left:603px;top:745px;width:15px;height:166px;background:linear-gradient(90deg,#c2c2c2,#a6a6a6);border:1px solid #7c7c7c"><div class="a" style="left:4px;top:79px;width:5px;height:1px;background:#555;box-shadow:0 3px 0 #555,0 6px 0 #555"></div></div>
<div class="a" style="left:1252px;top:52px;width:15px;height:912px;background:#d6d4d2;border-left:1px solid #8e8a86;border-right:1px solid #8e8a86"></div>
<div class="a" style="left:1252px;top:38px;width:15px;height:15px;background:linear-gradient(90deg,#fbfbfb,#e4e4e4);border:1px solid #8e8a86;border-radius:4px 4px 0 0"><svg class="a" style="left:2px;top:3px" width="9" height="7"><path d="M1,5.5 L4.5,2 L8,5.5" fill="none" stroke="#111" stroke-width="1.5"/></svg></div>
<div class="a" style="left:1252px;top:964px;width:15px;height:15px;background:linear-gradient(90deg,#fbfbfb,#e4e4e4);border:1px solid #8e8a86;border-radius:0 0 4px 4px"><svg class="a" style="left:2px;top:4px" width="9" height="7"><path d="M1,1.5 L4.5,5 L8,1.5" fill="none" stroke="#111" stroke-width="1.5"/></svg></div>
<div class="a" style="left:1252px;top:63px;width:15px;height:891px;background:linear-gradient(90deg,#c2c2c2,#a6a6a6);border:1px solid #7c7c7c"><div class="a" style="left:4px;top:441px;width:5px;height:1px;background:#555;box-shadow:0 3px 0 #555,0 6px 0 #555"></div></div>
<div class="a" style="left:51px;top:982px;width:549px;height:15px;background:#d6d4d2;border-top:1px solid #8e8a86;border-bottom:1px solid #8e8a86"></div>
<div class="a" style="left:51px;top:982px;width:15px;height:15px;background:linear-gradient(#fbfbfb,#e4e4e4);border:1px solid #8e8a86;border-radius:4px 0 0 4px"><svg class="a" style="left:3px;top:2px" width="7" height="9"><path d="M5,1 L1.5,4.5 L5,8" fill="none" stroke="#999" stroke-width="1.4"/></svg></div>
<div class="a" style="left:585px;top:982px;width:15px;height:15px;background:linear-gradient(#fbfbfb,#e4e4e4);border:1px solid #8e8a86;border-radius:0 4px 4px 0"><svg class="a" style="left:3px;top:2px" width="7" height="9"><path d="M1.5,1 L5,4.5 L1.5,8" fill="none" stroke="#111" stroke-width="1.5"/></svg></div>
<div class="a" style="left:65px;top:982px;width:386px;height:15px;background:linear-gradient(#c2c2c2,#a6a6a6);border:1px solid #7c7c7c"><div class="a" style="left:189px;top:4px;width:1px;height:5px;background:#555;box-shadow:3px 0 0 #555,6px 0 0 #555"></div></div>
<div class="a" style="left:679px;top:982px;width:570px;height:15px;background:#d6d4d2;border-top:1px solid #8e8a86;border-bottom:1px solid #8e8a86"></div>
<div class="a" style="left:679px;top:982px;width:15px;height:15px;background:linear-gradient(#fbfbfb,#e4e4e4);border:1px solid #8e8a86;border-radius:4px 0 0 4px"><svg class="a" style="left:3px;top:2px" width="7" height="9"><path d="M5,1 L1.5,4.5 L5,8" fill="none" stroke="#999" stroke-width="1.4"/></svg></div>
<div class="a" style="left:1234px;top:982px;width:15px;height:15px;background:linear-gradient(#fbfbfb,#e4e4e4);border:1px solid #8e8a86;border-radius:0 4px 4px 0"><svg class="a" style="left:3px;top:2px" width="7" height="9"><path d="M1.5,1 L5,4.5 L1.5,8" fill="none" stroke="#111" stroke-width="1.5"/></svg></div>
<div class="a" style="left:693px;top:982px;width:312px;height:15px;background:linear-gradient(#c2c2c2,#a6a6a6);border:1px solid #7c7c7c"><div class="a" style="left:152px;top:4px;width:1px;height:5px;background:#555;box-shadow:3px 0 0 #555,6px 0 0 #555"></div></div>
<div class="a" style="left:620px;top:41px;width:8px;height:8px;background:#f5c518;border:1px solid #a8acc4"></div>
<div class="a" style="left:619px;top:52px;width:12px;height:1px;background:#aaa6a2"></div>
<div class="a" style="left:620px;top:411px;width:9px;height:4px;background:#c0d0f0;border:1px solid #2a7ae4"></div>
<div class="a" style="left:620px;top:414px;width:9px;height:5px;background:#fdf3d0;border:1px solid #f0c840"></div>
<div class="a" style="left:620px;top:419px;width:9px;height:5px;background:#fdf3d0;border:1px solid #f0c840"></div>
<div class="a" style="left:620px;top:425px;width:9px;height:5px;background:#fdf3d0;border:1px solid #f0c840"></div>
</body></html>
